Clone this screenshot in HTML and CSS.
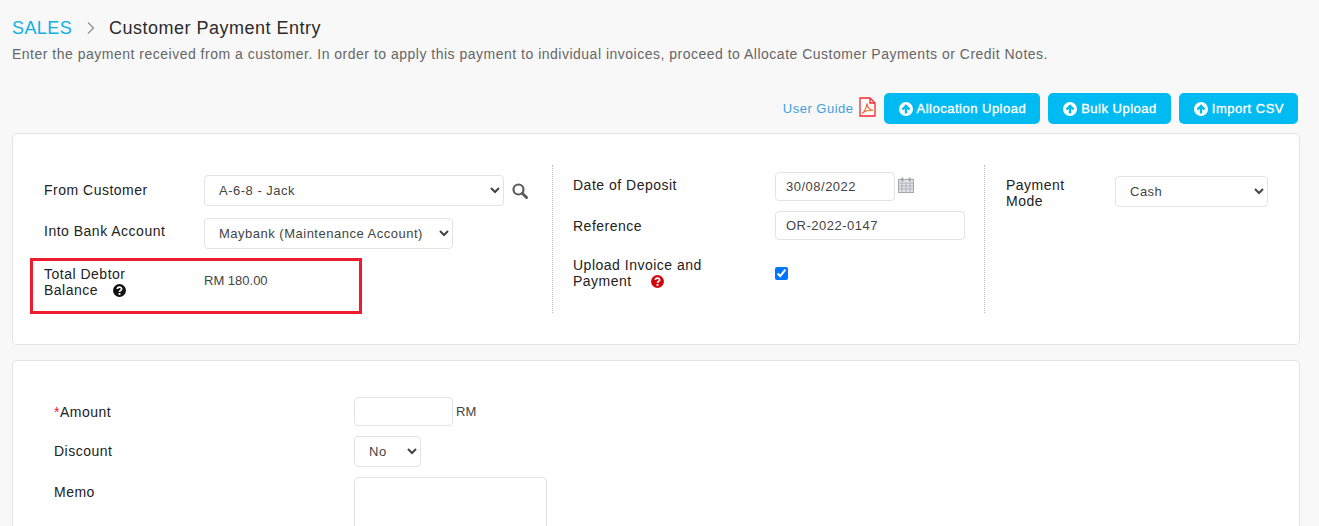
FILE: index.html
```html
<!DOCTYPE html>
<html lang="en">
<head>
<meta charset="utf-8">
<title>Customer Payment Entry</title>
<link rel="stylesheet" href="styles.css">
</head>
<body>
<svg class="sprite" width="0" height="0" aria-hidden="true">
  <symbol id="up" viewBox="0 0 16 16">
    <circle cx="8" cy="8" r="8" fill="#fff"/>
    <path d="M8 2.600 13 7.600 11.200 9.400 9.400 7.700V13H6.600V7.700L4.800 9.400 3 7.600Z" fill="#00baf2"/>
  </symbol>
</svg>
<main class="page">
  <header class="head">
    <h1 class="crumbs"><span class="crumb-root">SALES</span>
      <svg class="crumb-sep" viewBox="0 0 8 14" width="8" height="14"><path d="M1 1.500 6.500 7 1 12.500" fill="none" stroke="#999" stroke-width="1.500"/></svg>
      <span class="crumb-cur">Customer Payment Entry</span></h1>
    <p class="desc">Enter the payment received from a customer. In order to apply this payment to individual invoices, proceed to Allocate Customer Payments or Credit Notes.</p>
  </header>
  <div class="actions">
    <a class="guide">User Guide</a>
    <svg class="pdf" viewBox="0 0 17 20" width="17" height="20"><path d="M1 1H11L16 6V19H1Z" fill="#fff" stroke="#f5292f" stroke-width="1.300"/><path d="M11 1V6H16" fill="none" stroke="#f5292f" stroke-width="1.300"/><path d="M3 16.500C5 15.500 7.500 11 8 6.500 8.500 10 10.500 13 14 13.300 10.500 13 6 14 3 16.500Z" fill="none" stroke="#f56a2f" stroke-width="1.200"/></svg>
    <button class="btn"><svg class="btn-ico"><use href="#up"/></svg>Allocation Upload</button>
    <button class="btn"><svg class="btn-ico"><use href="#up"/></svg>Bulk Upload</button>
    <button class="btn"><svg class="btn-ico"><use href="#up"/></svg>Import CSV</button>
  </div>

  <section class="card card-top">
    <div class="col col-a">
      <div class="row row-customer">
        <label class="lbl">From Customer</label>
        <select class="ctl sel-customer"><option>A-6-8 - Jack</option></select>
        <svg class="search" viewBox="0 0 16 16" width="16" height="16"><circle cx="6.500" cy="6.500" r="5" fill="none" stroke="#5c5c5c" stroke-width="2.200"/><path d="M10.300 10.300 14.500 14.500" stroke="#5c5c5c" stroke-width="3" stroke-linecap="round"/></svg>
      </div>
      <div class="row row-bank">
        <label class="lbl">Into Bank Account</label>
        <select class="ctl sel-bank"><option>Maybank (Maintenance Account)</option></select>
      </div>
      <div class="row-debtor">
        <div class="lbl lbl-wrap">Total Debtor<br>Balance <svg class="q" viewBox="0 0 14 14" width="13" height="13"><circle cx="7" cy="7" r="7" fill="#111"/><path d="M4.700 5.400C4.800 2.800 9.300 2.800 9.300 5.300 9.300 7 7 6.800 7 8.600" fill="none" stroke="#fff" stroke-width="1.800"/><rect x="6" y="9.700" width="2" height="2" fill="#fff"/></svg></div>
        <div class="debtor-val">RM 180.00</div>
      </div>
    </div>
    <div class="col col-b">
      <div class="row row-date">
        <label class="lbl">Date of Deposit</label>
        <input class="ctl inp-date" value="30/08/2022">
        <svg class="cal" viewBox="0 0 16 16" width="16" height="16"><rect x="0.500" y="2.500" width="15" height="13" fill="#e2e4e8" stroke="#a5a8ad"/><path d="M0.500 6H15.500M0.500 9H15.500M0.500 12H15.500M4 6V16M8 6V16M12 6V16" stroke="#a5a8ad" stroke-width="0.800"/><rect x="3" y="0.500" width="2.500" height="4" rx="1" fill="#a5a8ad"/><rect x="10.500" y="0.500" width="2.500" height="4" rx="1" fill="#a5a8ad"/></svg>
      </div>
      <div class="row row-ref">
        <label class="lbl">Reference</label>
        <input class="ctl inp-ref" value="OR-2022-0147">
      </div>
      <div class="row row-upload">
        <div class="lbl lbl-wrap">Upload Invoice and<br>Payment <svg class="q q-red" viewBox="0 0 14 14" width="13" height="13"><circle cx="7" cy="7" r="7" fill="#d0070f"/><path d="M4.700 5.400C4.800 2.800 9.300 2.800 9.300 5.300 9.300 7 7 6.800 7 8.600" fill="none" stroke="#fff" stroke-width="1.800"/><rect x="6" y="9.700" width="2" height="2" fill="#fff"/></svg></div>
        <input class="check" type="checkbox" checked>
      </div>
    </div>
    <div class="col col-c">
      <div class="lbl lbl-wrap lbl-mode">Payment<br>Mode</div>
      <select class="ctl sel-mode"><option>Cash</option></select>
    </div>
  </section>

  <section class="card card-bottom">
    <div class="line line-amount">
      <label class="lbl lbl-wide"><span class="req">*</span>Amount</label>
      <input class="ctl inp-amount">
      <span class="unit">RM</span>
    </div>
    <div class="line line-discount">
      <label class="lbl lbl-wide">Discount</label>
      <select class="ctl sel-discount"><option>No</option></select>
    </div>
    <div class="line line-memo">
      <label class="lbl lbl-wide">Memo</label>
      <textarea class="ctl memo"></textarea>
    </div>
  </section>
</main>
</body>
</html>
```
FILE: styles.css
```css
* { box-sizing: border-box; }
html, body { margin: 0; height: 526px; overflow: hidden; }
body {
  background: #f8f8f8;
  font-family: "Liberation Sans", Arial, sans-serif;
  font-size: 14px;
  letter-spacing: 0.5px;
  color: #222;
}
.sprite { position: absolute; }
.page { padding: 17px 19px 0 12px; }

.crumbs {
  margin: 0;
  display: flex;
  align-items: center;
  font-size: 18px;
  font-weight: 400;
  line-height: 22px;
  letter-spacing: 0.4px;
}
.crumb-root { color: #0fb0e6; }
.crumb-sep { margin: 0 14px 0 15px; }
.crumb-cur { color: #2b2b2b; letter-spacing: 0.5px; }
.desc { margin: 6px 0 0; line-height: 18px; color: #666; }

.actions {
  display: flex;
  align-items: center;
  justify-content: flex-end;
  gap: 8px;
  margin-top: 30px;
  padding-right: 2px;
  height: 31px;
}
.guide { color: #3f9fdc; font-size: 13px; }
.pdf { margin: -3px 0 0 -3px; }
.btn {
  display: flex;
  align-items: center;
  height: 31px;
  padding: 0 14px 0 15px;
  border: 0;
  border-radius: 5px;
  background: #00baf2;
  color: #fff;
  font: inherit;
  font-size: 13px;
  letter-spacing: 0.5px;
  -webkit-text-stroke: 0.35px #fff;
}
.btn-ico { width: 14px; height: 14px; margin-right: 4px; }

.card {
  background: #fff;
  border: 1px solid #e5e5e5;
  border-radius: 4px;
}
.card-top {
  display: flex;
  margin-top: 9px;
  height: 212px;
  padding-top: 31px;
}
.col { height: 148px; }
.col-a { width: 540px; padding-left: 31px; border-right: 1px dotted #bbb; }
.col-b { width: 432px; padding-left: 20px; border-right: 1px dotted #bbb; }
.col-c { flex: 1; display: flex; padding-left: 21px; padding-top: 11px; align-items: flex-start; }

.row { display: flex; align-items: center; }
.lbl { flex: none; color: #222; line-height: 16px; }
.col-a .lbl { width: 160px; }
.col-b .lbl { width: 202px; }
.lbl-mode { width: 109px; margin-top: 1px; }
.lbl-wide { width: 300px; }

.ctl {
  height: 31px;
  border: 1px solid #e3e3e3;
  border-radius: 4px;
  background: #fff;
  color: #444;
  font: inherit;
  font-size: 13px;
  letter-spacing: 0.5px;
  padding: 0 10px;
  outline: 0;
}
input.ctl, textarea.ctl { height: 29px; }
.sel-customer { width: 300px; }
.sel-bank { width: 249px; }
.sel-mode { width: 153px; }
.sel-discount { width: 67px; }
.search { margin-left: 8px; }
.row-customer { margin-top: 10px; }
.row-customer .lbl { margin-top: -2px; }
.row-bank { margin-top: 12px; }
.row-bank .lbl { margin-top: -6px; }

.row-debtor {
  display: flex;
  width: 332px;
  height: 56px;
  margin: 9px 0 0 -14px;
  padding: 5px 0 0 11px;
  border: 3px solid #ed1c2e;
}
.row-debtor .lbl { width: 160px; }
.debtor-val { color: #444; margin-top: 7px; line-height: 16px; font-size: 13px; letter-spacing: 0; }
.q { vertical-align: -2px; margin-left: 11px; }
.q-red { margin-left: 15px; }

.row-date { margin-top: 7px; }
.row-date .lbl { margin-top: -4px; }
.row-ref { margin-top: 10px; }
.row-upload { margin-top: 17px; }
.inp-date { width: 120px; }
.inp-ref { width: 190px; }
.cal { margin: -3px 0 0 3px; }
.check { width: 13px; height: 13px; margin: 0; accent-color: #0075ff; }

.card-bottom { margin-top: 15px; height: 300px; padding: 36px 0 0 41px; }
.line { display: flex; align-items: center; }
.line-discount { margin-top: 10px; }
.line-discount .lbl { margin-top: -2px; }
.line-memo { margin-top: 10px; align-items: flex-start; }
.line-memo .lbl { margin-top: 7px; }
.req { color: #e8203a; }
.inp-amount { width: 99px; }
.unit { margin-left: 3px; color: #444; font-size: 13px; letter-spacing: 0; }
textarea.memo { width: 193px; height: 110px; resize: none; }
```
